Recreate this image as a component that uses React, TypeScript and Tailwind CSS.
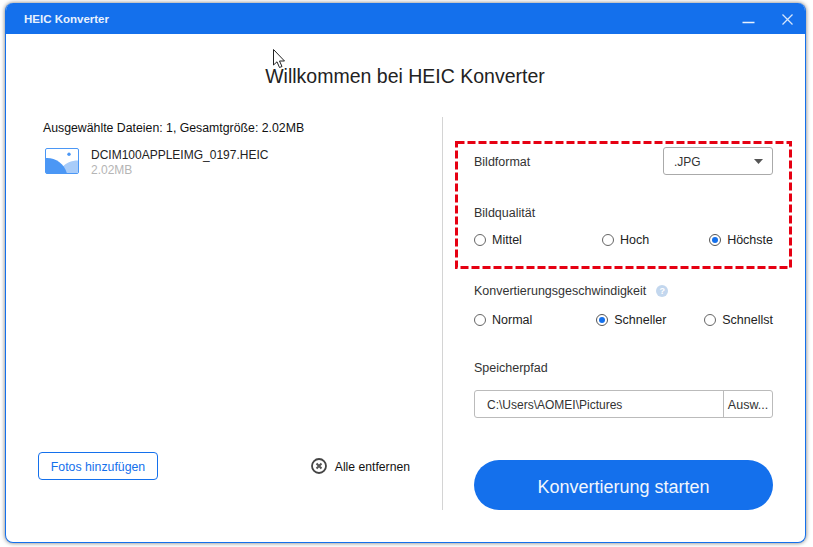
function Radio({ label, checked }: { label: string; checked?: boolean }) {
  return (
    <div className="flex items-center gap-[6px]">
      <span className={`flex h-[12px] w-[12px] items-center justify-center rounded-full border ${checked ? "border-[#555]" : "border-[#666]"} bg-white`}>
        {checked && <span className="h-[6px] w-[6px] rounded-full bg-[#1470ec]" />}
      </span>
      <span className="text-[12.5px] leading-[14px] text-[#222]">{label}</span>
    </div>
  );
}

export default function App() {
  return (
    <div className="relative h-[547px] w-[813px] overflow-hidden bg-white pl-[5px] pt-[3px] font-['Liberation_Sans',Arial,sans-serif]">
      <div className="flex h-[540px] w-[801px] flex-col overflow-hidden rounded-[8px] border border-t-0 border-[#1470ec] bg-white shadow-[0_0_4px_rgba(0,0,0,0.55)]">
        <div className="flex h-[31px] shrink-0 items-center justify-between bg-[#1470ec] pl-[18px] pr-[11px]">
          <span className="pt-[3px] text-[11.5px] font-bold text-[#e8f1fd]">HEIC Konverter</span>
          <div className="mt-[2px] flex items-center gap-[26px]">
            <svg width="13" height="13" viewBox="0 0 13 13"><path d="M0.500 9.500h12" stroke="#e8f1fd" strokeWidth="1.6" /></svg>
            <svg width="13" height="13" viewBox="0 0 13 13"><path d="M1.500 1.500l10 10M11.500 1.500l-10 10" stroke="#d5e5fb" strokeWidth="1.3" /></svg>
          </div>
        </div>

        <h1 className="mt-[30px] shrink-0 pr-[1px] text-center text-[19.5px] font-normal leading-[24px] text-[#222]">Willkommen bei HEIC Konverter</h1>

        <div className="mt-[29px] flex min-h-0 flex-1 pb-[32px]">
          <div className="flex w-[437px] shrink-0 flex-col justify-between border-r border-[#d4d4d4] pb-[30px]">
            <div className="pl-[37px] pt-[4px]">
              <p className="text-[12.3px] leading-[14px] text-[#111]">Ausgewählte Dateien: 1, Gesamtgröße: 2.02MB</p>
              <div className="ml-[2px] mt-[13px] flex items-start gap-[12px]">
                <svg width="34" height="26" viewBox="0 0 34 26">
                  <rect x="0.500" y="0.500" width="33" height="25" rx="1.500" fill="#fff" stroke="#4b97f5" />
                  <path d="M33 12.500 C26 12.500 21 15 17.500 19 C19 21 20.500 23 21 25 H32 Q33 25 33 24Z" fill="#a8ccf9" />
                  <path d="M1 10 C10 9.500 19 15 22 25.500 H2 Q1 25.500 1 24.500Z" fill="#4b97f5" />
                  <circle cx="24" cy="6.300" r="1.700" fill="#4b97f5" />
                </svg>
                <div>
                  <p className="text-[12px] leading-[14px] text-[#222]">DCIM100APPLEIMG_0197.HEIC</p>
                  <p className="mt-[2px] text-[12px] leading-[13px] text-[#b5b5b5]">2.02MB</p>
                </div>
              </div>
            </div>
            <div className="flex items-center justify-between pl-[32px] pr-[32px]">
              <button className="h-[28px] w-[120px] rounded-[4px] border border-[#1470ec] pt-[2px] text-[12.3px] text-[#1470ec]">Fotos hinzufügen</button>
              <div className="flex items-center gap-[8px]">
                <svg width="16" height="16" viewBox="0 0 16 16">
                  <circle cx="8" cy="8" r="7" fill="none" stroke="#444" strokeWidth="1.8" />
                  <path d="M5.500 5.500l5 5M10.500 5.500l-5 5" stroke="#555" strokeWidth="2" />
                </svg>
                <span className="pt-[2px] text-[12.2px] text-[#111]">Alle entfernen</span>
              </div>
            </div>
          </div>

          <div className="flex min-w-0 flex-1 flex-col">
            <div className="relative ml-[12px] mt-[24px] h-[128px] w-[337px] pl-[19px] pr-[19px] pt-[6px]">
              <svg className="absolute left-0 top-0" width="337" height="128" viewBox="0 0 337 128" fill="none">
                <rect x="1.500" y="1.500" width="334" height="125" stroke="#e60012" strokeWidth="3" strokeDasharray="8 3" />
              </svg>
              <div className="flex items-center justify-between">
                <span className="pt-[2px] text-[12.5px] text-[#333]">Bildformat</span>
                <div className="flex h-[28px] w-[110px] items-center justify-between rounded-[3px] border border-[#aaa] pl-[10px] pr-[9px] text-[12px] text-[#333]">
                  <span className="pt-[2px]">.JPG</span>
                  <svg width="9" height="5" viewBox="0 0 9 5"><path d="M0 0h9L4.500 5z" fill="#555" /></svg>
                </div>
              </div>
              <p className="mt-[31px] text-[12.5px] leading-[14px] text-[#333]">Bildqualität</p>
              <div className="mt-[13px] flex items-center justify-between">
                <Radio label="Mittel" />
                <div className="ml-[20px]"><Radio label="Hoch" /></div>
                <Radio label="Höchste" checked />
              </div>
            </div>

            <div className="ml-[31px] w-[299px]">
              <div className="mt-[16px] flex items-center gap-[10px]">
                <span className="text-[12.5px] leading-[14px] text-[#333]">Konvertierungsgeschwindigkeit</span>
                <span className="flex h-[12px] w-[12px] items-center justify-center rounded-full bg-[#c3d7ee] text-[9px] font-bold leading-none text-white">?</span>
              </div>
              <div className="mt-[15px] flex items-center justify-between">
                <Radio label="Normal" />
                <div className="ml-[26px]"><Radio label="Schneller" checked /></div>
                <Radio label="Schnellst" />
              </div>
              <p className="mt-[34px] text-[12.5px] leading-[14px] text-[#333]">Speicherpfad</p>
              <div className="mt-[15px] flex h-[28px] items-center rounded-[3px] border border-[#bbb] text-[12px] text-[#333]">
                <span className="flex-1 pl-[12px] pt-[2px]">C:\Users\AOMEI\Pictures</span>
                <span className="flex h-full w-[49px] items-center justify-center border-l border-[#bbb] pt-[2px] text-[12.5px]">Ausw...</span>
              </div>
              <button className="mt-[42px] h-[50px] w-[299px] rounded-full bg-[#1470ec] pt-[4px] text-[18px] text-[#f0f6fe]">Konvertierung starten</button>
            </div>
          </div>
        </div>
      </div>

      <svg className="absolute left-[273px] top-[49px]" width="13" height="20" viewBox="0 0 13 20">
        <path d="M0.500 0.500V16L4 12.800L6.500 18.500L9 17.500L6.500 12H11.500Z" fill="#fff" stroke="#222" strokeWidth="1" />
      </svg>
    </div>
  );
}
